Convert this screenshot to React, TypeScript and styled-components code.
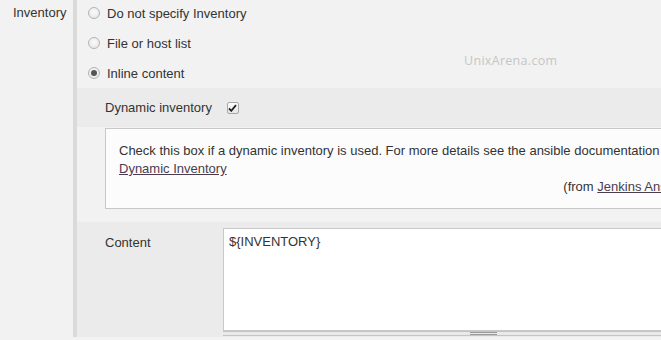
import React from 'react';
import styled, { createGlobalStyle } from 'styled-components';

const GlobalStyle = createGlobalStyle`
  html, body {
    margin: 0;
    padding: 0;
    background: #f2f2f2;
    overflow: hidden;
  }
  body {
    font-family: "Liberation Sans", Arial, sans-serif;
    font-size: 13px;
    color: #333;
  }
`;

const Page = styled.div`
  position: relative;
  width: 780px;
  height: 340px;
  display: flex;
  align-items: flex-start;
`;

const FieldLabel = styled.div`
  width: 73px;
  box-sizing: border-box;
  padding: 5px 0 0 13px;
  line-height: 16px;
`;

const Settings = styled.div`
  flex: 1;
  height: 337px;
  border-left: 4px solid #dadada;
  display: flex;
  flex-direction: column;
`;

const Options = styled.div`
  margin-top: -2px;
  padding-left: 11px;
`;

const OptionRow = styled.label`
  height: 30px;
  display: flex;
  align-items: center;
  gap: 7px;
`;

const Radio = styled.span<{ $checked?: boolean }>`
  width: 12px;
  height: 12px;
  box-sizing: border-box;
  border-radius: 50%;
  border: 1px solid #b4b4b4;
  background: radial-gradient(circle at 50% 40%, #fafafa 0%, #e4e4e4 100%);
  display: flex;
  align-items: center;
  justify-content: center;
  &::after {
    content: '';
    display: ${(p) => (p.$checked ? 'block' : 'none')};
    width: 6px;
    height: 6px;
    border-radius: 50%;
    background: #555;
  }
`;

const Nested = styled.div`
  flex: 1;
  display: flex;
  flex-direction: column;
`;

const CheckRow = styled.div`
  height: 39px;
  background: #ebebeb;
  display: flex;
  align-items: center;
  padding-left: 28px;
  gap: 15px;
`;

const CheckBox = styled.span`
  width: 12px;
  height: 12px;
  box-sizing: border-box;
  border: 1px solid #a8a8a8;
  border-radius: 2px;
  background: linear-gradient(#fdfdfd, #e6e6e6);
  display: flex;
  align-items: center;
  justify-content: center;
`;

const HelpArea = styled.div`
  padding: 1px 35px 13px 28px;
`;

const HelpBox = styled.div`
  border: 1px solid #c8c8c8;
  background: #fcfcfc;
  padding: 13px 13px 12px 13px;
  line-height: 18px;
`;

const Link = styled.a`
  color: #4b3c4f;
  text-decoration: underline;
`;

const From = styled.div`
  text-align: right;
`;

const ContentRow = styled.div`
  flex: 1;
  background: #ebebeb;
  display: flex;
  align-items: flex-start;
  padding: 6px 0 0 28px;
`;

const ContentLabel = styled.div`
  width: 118px;
  padding-top: 7px;
  line-height: 16px;
`;

const EditorBox = styled.div`
  width: 521px;
  display: flex;
  flex-direction: column;
`;

const TextArea = styled.div`
  height: 103px;
  box-sizing: border-box;
  border: 1px solid #c8c8c8;
  background: #fff;
  padding: 4px 5px;
  line-height: 17px;
  font-size: 13px;
  color: #333;
`;

const Grip = styled.div`
  height: 5px;
  box-sizing: border-box;
  border-top: 1px solid #c4c4c4;
  border-bottom: 1px solid #c4c4c4;
  background: #e9e9e9;
  display: flex;
  justify-content: center;
  align-items: center;
  &::after {
    content: '';
    width: 27px;
    height: 1px;
    border-top: 1px solid #999;
    border-bottom: 1px solid #999;
  }
`;

const Watermark = styled.div`
  position: absolute;
  left: 464px;
  top: 52px;
  font-family: "Open Sans", "Liberation Sans", sans-serif;
  font-size: 12.5px;
  letter-spacing: 0.3px;
  color: #c6c6c6;
`;

const options = [
  { label: 'Do not specify Inventory', checked: false },
  { label: 'File or host list', checked: false },
  { label: 'Inline content', checked: true },
];

const App: React.FC = () => {
  return (
    <>
      <GlobalStyle />
      <Page>
        <FieldLabel>Inventory</FieldLabel>
        <Settings>
          <Options>
            {options.map((o) => (
              <OptionRow key={o.label}>
                <Radio $checked={o.checked} />
                {o.label}
              </OptionRow>
            ))}
          </Options>
          <Nested>
            <CheckRow>
              Dynamic inventory
              <CheckBox>
                <svg width="9" height="8" viewBox="0 0 9 8">
                  <path d="M1 4.5 L3.3 6.8 L8 1.2" fill="none" stroke="#222" strokeWidth="1.8" />
                </svg>
              </CheckBox>
            </CheckRow>
            <HelpArea>
              <HelpBox>
                Check this box if a dynamic inventory is used. For more details see the ansible documentation about{' '}
                <Link href="#">Dynamic Inventory</Link>
                <From>
                  (from <Link href="#">Jenkins Ansible Plugin</Link>)
                </From>
              </HelpBox>
            </HelpArea>
            <ContentRow>
              <ContentLabel>Content</ContentLabel>
              <EditorBox>
                <TextArea>{'${INVENTORY}'}</TextArea>
                <Grip />
              </EditorBox>
            </ContentRow>
          </Nested>
        </Settings>
        <Watermark>UnixArena.com</Watermark>
      </Page>
    </>
  );
};

export default App;
